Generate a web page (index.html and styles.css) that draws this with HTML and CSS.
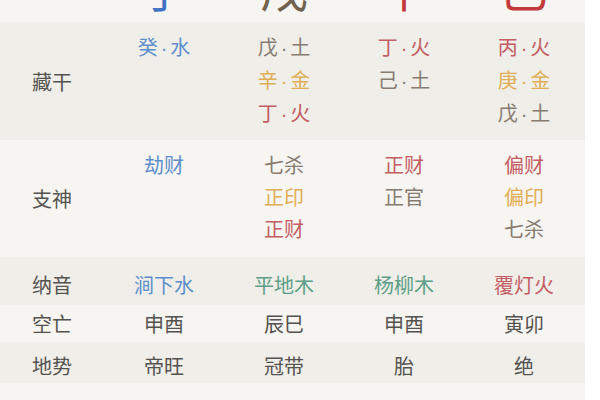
FILE: index.html
```html
<!DOCTYPE html>
<html lang="zh">
<head>
<meta charset="utf-8">
<link rel="stylesheet" href="styles.css">
</head>
<body>
<div class="table">
  <div class="row head">
    <div class="label"></div>
    <div class="cell"><span class="big water">子</span></div>
    <div class="cell"><span class="big earth">戌</span></div>
    <div class="cell"><span class="big fire">午</span></div>
    <div class="cell"><span class="big fire">巳</span></div>
  </div>
  <div class="row dark r1">
    <div class="label">藏干</div>
    <div class="cell stack"><span class="water">癸<span class="dot">·</span>水</span></div>
    <div class="cell stack"><span class="earth">戊<span class="dot">·</span>土</span><span class="metal">辛<span class="dot">·</span>金</span><span class="fire">丁<span class="dot">·</span>火</span></div>
    <div class="cell stack"><span class="fire">丁<span class="dot">·</span>火</span><span class="earth">己<span class="dot">·</span>土</span></div>
    <div class="cell stack"><span class="fire">丙<span class="dot">·</span>火</span><span class="metal">庚<span class="dot">·</span>金</span><span class="earth">戊<span class="dot">·</span>土</span></div>
  </div>
  <div class="row light r2">
    <div class="label">支神</div>
    <div class="cell stack"><span class="water">劫财</span></div>
    <div class="cell stack"><span class="earth">七杀</span><span class="metal">正印</span><span class="fire">正财</span></div>
    <div class="cell stack"><span class="fire">正财</span><span class="earth">正官</span></div>
    <div class="cell stack"><span class="fire">偏财</span><span class="metal">偏印</span><span class="earth">七杀</span></div>
  </div>
  <div class="row dark r3">
    <div class="label">纳音</div>
    <div class="cell"><span class="water">涧下水</span></div>
    <div class="cell"><span class="wood">平地木</span></div>
    <div class="cell"><span class="wood">杨柳木</span></div>
    <div class="cell"><span class="fire">覆灯火</span></div>
  </div>
  <div class="row light r4">
    <div class="label">空亡</div>
    <div class="cell"><span class="plain">申酉</span></div>
    <div class="cell"><span class="plain">辰巳</span></div>
    <div class="cell"><span class="plain">申酉</span></div>
    <div class="cell"><span class="plain">寅卯</span></div>
  </div>
  <div class="row dark r5">
    <div class="label">地势</div>
    <div class="cell"><span class="plain">帝旺</span></div>
    <div class="cell"><span class="plain">冠带</span></div>
    <div class="cell"><span class="plain">胎</span></div>
    <div class="cell"><span class="plain">绝</span></div>
  </div>
  <div class="row light r6">
    <div class="label"></div>
    <div class="cell"></div>
    <div class="cell"></div>
    <div class="cell"></div>
    <div class="cell"></div>
  </div>
</div>
</body>
</html>
```

FILE: styles.css
```css
html, body {
  margin: 0;
  padding: 0;
  background: #ffffff;
}
body {
  width: 600px;
  height: 400px;
  overflow: hidden;
  font-family: "Noto Sans CJK SC", "Noto Sans", sans-serif;
  color: #555350;
}
.table {
  width: 585px;
  display: flex;
  flex-direction: column;
}
.row {
  display: grid;
  grid-template-columns: 104px repeat(4, 120px);
  box-sizing: border-box;
}
.head {
  height: 22px;
  overflow: hidden;
  background: #f6f5f2;
}
.dark { background: #efeee9; }
.light { background: #f6f5f1; }
.r1 { height: 118px; }
.r2 { height: 117px; }
.r3 { height: 48px; padding-top: 7px; }
.r4 { height: 37px; }
.r5 { height: 41px; padding-top: 6px; }
.r6 { height: 17px; }
.label {
  display: flex;
  align-items: center;
  justify-content: center;
  font-size: 20px;
  color: #555350;
}
.cell {
  display: flex;
  align-items: center;
  justify-content: center;
  font-size: 20px;
}
.cell.stack {
  flex-direction: column;
  justify-content: flex-start;
  padding-top: 9px;
  line-height: 32px;
}
.dot {
  font-family: "Liberation Sans", sans-serif;
  margin: 0 3px;
}
.head .cell {
  align-items: flex-start;
}
.big {
  font-size: 48px;
  line-height: 48px;
  margin-top: -38px;
}
.water { color: #5d8ecb; }
.earth { color: #867b70; }
.metal { color: #dfae55; }
.fire { color: #c45c63; }
.wood { color: #5d9e86; }
.plain { color: #555350; }
.head .water { color: #3f72c2; }
.head .earth { color: #6f624e; }
.head .fire { color: #c2393c; }
```
